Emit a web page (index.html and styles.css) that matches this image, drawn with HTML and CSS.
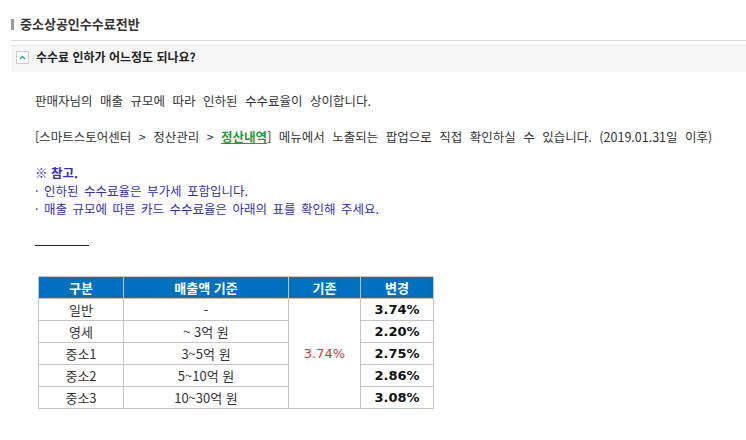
FILE: index.html
```
<!DOCTYPE html>
<html lang="ko">
<head>
<meta charset="utf-8">
<link rel="stylesheet" href="styles.css">
</head>
<body>
<div class="wrap">
  <div class="title"><span class="bar"></span><span class="title-text">중소상공인수수료전반</span></div>
  <div class="qbox">
    <span class="qicon"><svg width="13" height="13" viewBox="0 0 13 13"><rect x="0.5" y="0.5" width="12" height="12" fill="#fff" stroke="#cfcfcf"/><path d="M4 8 L6.5 5.5 L9 8" fill="none" stroke="#27b3a3" stroke-width="1.5"/></svg></span>
    <span class="qtext">수수료 인하가 어느정도 되나요?</span>
  </div>
  <div class="content">
    <p>판매자님의 매출 규모에 따라 인하된 수수료율이 상이합니다.</p>
    <p class="gap">[스마트스토어센터 &gt; 정산관리 &gt; <a class="link">정산내역</a>] 메뉴에서 노출되는 팝업으로 직접 확인하실 수 있습니다. (2019.01.31일 이후)</p>
    <div class="note gap">
      <p class="note-title">※ 참고.</p>
      <p>· 인하된 수수료율은 부가세 포함입니다.</p>
      <p>· 매출 규모에 따른 카드 수수료율은 아래의 표를 확인해 주세요.</p>
    </div>
    <div class="rule"></div>
    <table class="rates">
      <colgroup><col class="c1"><col class="c2"><col class="c3"><col class="c4"></colgroup>
      <thead>
        <tr><th>구분</th><th>매출액 기준</th><th>기존</th><th>변경</th></tr>
      </thead>
      <tbody>
        <tr><td>일반</td><td>-</td><td class="old" rowspan="5">3.74%</td><td class="new">3.74%</td></tr>
        <tr><td>영세</td><td>~ 3억 원</td><td class="new">2.20%</td></tr>
        <tr><td>중소1</td><td>3~5억 원</td><td class="new">2.75%</td></tr>
        <tr><td>중소2</td><td>5~10억 원</td><td class="new">2.86%</td></tr>
        <tr><td>중소3</td><td>10~30억 원</td><td class="new">3.08%</td></tr>
      </tbody>
    </table>
  </div>
</div>
</body>
</html>
```
FILE: styles.css
```
html, body {
  margin: 0;
  padding: 0;
  background: #fff;
}
body {
  font-family: "Noto Sans CJK KR", "Noto Sans", sans-serif;
  color: #333;
}
.wrap {
  padding-left: 11px;
}
.title {
  display: flex;
  align-items: center;
  height: 16px;
  padding: 16px 0 8px 0;
  border-bottom: 1px solid #dcdcdc;
}
.bar {
  width: 3px;
  height: 11px;
  background: #9a9a9a;
  margin-right: 6px;
}
.title-text {
  font-size: 13px;
  font-weight: bold;
  line-height: 16px;
  color: #333;
}
.qbox {
  margin-top: 4px;
  border-top: 1px solid #e2e2e2;
  background: #f7f7f7;
  display: flex;
  align-items: center;
  height: 14px;
  padding: 4px 0 8px 5px;
}
.qicon {
  display: flex;
  width: 13px;
  height: 13px;
  margin-right: 7px;
}
.qtext {
  font-size: 12px;
  font-weight: bold;
  line-height: 14px;
  color: #222;
}
.content {
  padding: 20px 0 0 24px;
  font-size: 12.5px;
  line-height: 18px;
  word-spacing: 4px;
}
.content p {
  margin: 0;
}
.content .gap {
  margin-top: 18px;
}
.link {
  color: #15a03c;
  font-weight: bold;
  text-decoration: underline;
}
.note {
  color: #3232b0;
  word-spacing: 2px;
}
.content .note-title {
  font-weight: bold;
  color: #3a30b6;
  word-spacing: 0;
}
.rule {
  width: 54px;
  height: 0;
  margin-top: 27px;
  border-top: 1px solid #222;
}
.rates {
  margin: 30px 0 0 3px;
  border-collapse: collapse;
  table-layout: fixed;
  width: 395px;
  word-spacing: 0;
}
.c1 { width: 85px; }
.c2 { width: 165px; }
.c3 { width: 72px; }
.c4 { width: 73px; }
.rates th,
.rates td {
  border: 1px solid #c4c4c4;
  padding: 0;
  height: 21px;
  text-align: center;
  font-size: 13px;
  line-height: 20px;
}
.rates th {
  background: #0070c0;
  color: #fff;
  font-weight: bold;
}
.rates td {
  color: #333;
}
.rates td.old {
  color: #d9343a;
  font-family: "DejaVu Sans", sans-serif;
  font-size: 13px;
}
.rates td.new {
  color: #111;
  font-family: "DejaVu Sans", sans-serif;
  font-weight: bold;
  font-size: 13px;
}
```
